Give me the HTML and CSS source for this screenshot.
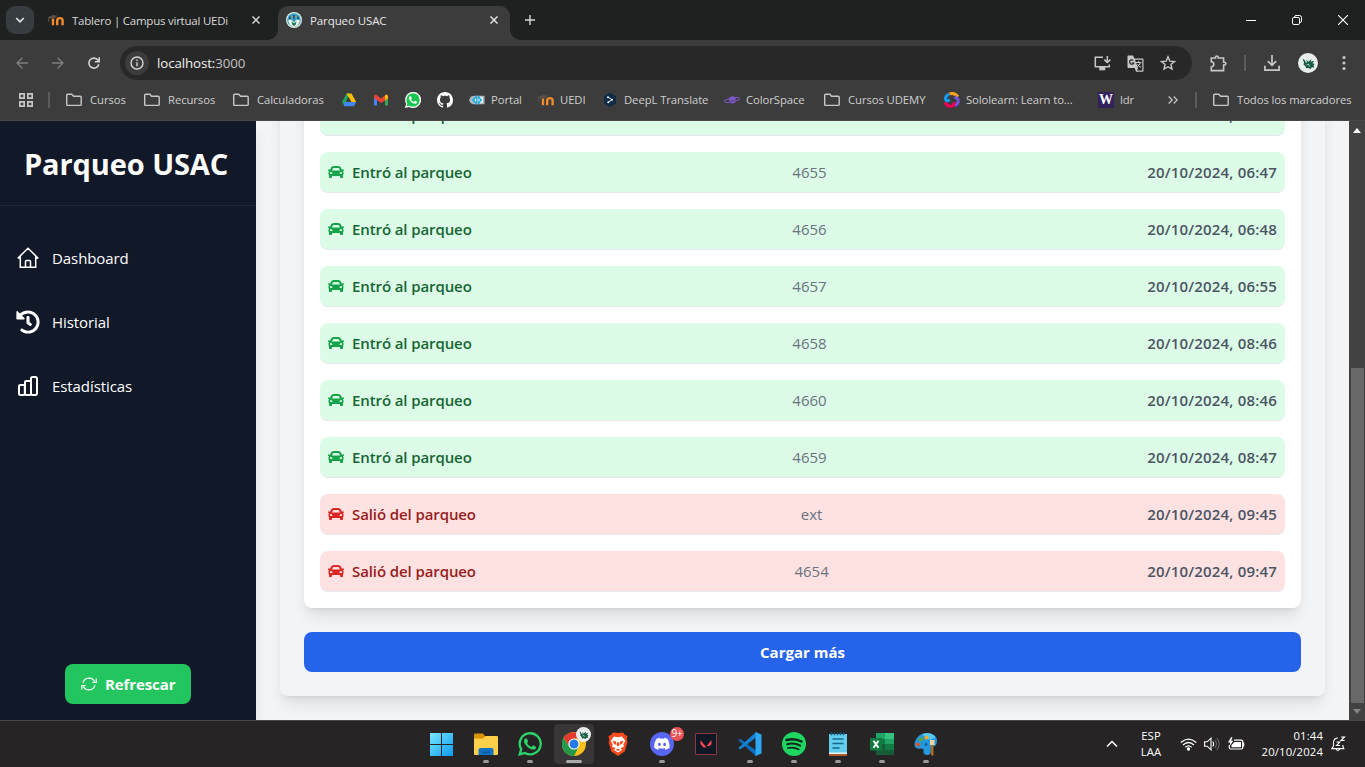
FILE: index.html
```html
<!DOCTYPE html>
<html lang="es">
<head>
<meta charset="utf-8">
<title>Parqueo USAC</title>
<link rel="stylesheet" href="styles.css">
</head>
<body>
<svg class="sprite" aria-hidden="true">
  <symbol id="car" viewBox="0 0 512 512"><path fill="currentColor" d="M499.99 176h-59.87l-16.64-41.6C406.38 91.63 365.57 64 319.5 64h-127c-46.06 0-86.88 27.63-103.99 70.4L71.87 176H12.01C4.2 176-1.53 183.34.37 190.91l6 24C7.7 220.25 12.5 224 18.01 224h20.07C24.65 235.73 16 252.78 16 272v48c0 16.12 6.16 30.67 16 41.93V416c0 17.67 14.33 32 32 32h32c17.67 0 32-14.33 32-32v-32h256v32c0 17.67 14.33 32 32 32h32c17.67 0 32-14.33 32-32v-54.07c9.84-11.25 16-25.8 16-41.93v-48c0-19.22-8.65-36.27-22.07-48H494c5.51 0 10.31-3.75 11.64-9.09l6-24c1.89-7.57-3.84-14.91-11.65-14.91zm-352.06-17.83c7.29-18.22 24.94-30.17 44.57-30.17h127c19.63 0 37.28 11.95 44.57 30.17L384 208H128l19.93-49.83zM96 319.8c-19.2 0-32-12.76-32-31.9S76.8 256 96 256s48 28.71 48 47.85-28.8 15.95-48 15.95zm320 0c-19.2 0-48 3.19-48-15.95S396.8 256 416 256s32 12.76 32 31.9-12.8 31.9-32 31.9z"/></symbol>
  <symbol id="folder" viewBox="0 0 16 16"><path fill="none" stroke="#c7c7c7" stroke-width="1.4" d="M.7 3.2q0-1 1-1h4l1.9 2h6.6q1 0 1 1v7.2q0 1-1 1H1.7q-1 0-1-1z"/></symbol>
  <symbol id="moodle" viewBox="0 0 16 16"><path fill="none" stroke="#f08a2c" stroke-width="2.4" d="M5 13.300V6.500M9.200 13.300V8.600Q9.200 6.100 11.900 6.100T14.600 8.600V13.300"/><path fill="#5a5048" d="M.2 5 5 3l4.500.7L7.600 5.800 4 6.400H1.200V10H.3z"/></symbol>
  <symbol id="dragon" viewBox="0 0 20 20"><circle cx="10" cy="10" r="10" fill="#e9eeec"/><path fill="#175c46" d="m4.500 5.500 2.300 1.800L8 9.800l1-.3-.7-3 2 2.300L13.500 6l-.8 2.800 3.800-1-2 2.400 2 .8-1 1.600.8 2-2.400-.3-1.400 1.700-2.200-1-2 .3-1.300-2.500-1.500-1.400.5-2z"/><path fill="none" stroke="#e9eeec" stroke-width=".7" d="m8.500 12 2-1 1 2.400"/></symbol>
  <symbol id="phone" viewBox="0 0 24 24"><path fill="currentColor" d="M17.472 14.382c-.297-.149-1.758-.867-2.03-.967-.273-.099-.471-.148-.67.15-.197.297-.767.966-.94 1.164-.173.199-.347.223-.644.075-.297-.15-1.255-.463-2.39-1.475-.883-.788-1.48-1.761-1.653-2.059-.173-.297-.018-.458.13-.606.134-.133.298-.347.446-.52.149-.174.198-.298.298-.497.099-.198.05-.371-.025-.52-.075-.149-.669-1.612-.916-2.207-.242-.579-.487-.5-.669-.51-.173-.008-.371-.01-.57-.01-.198 0-.52.074-.792.372-.272.297-1.04 1.016-1.04 2.479 0 1.462 1.065 2.875 1.213 3.074.149.198 2.096 3.2 5.077 4.487.709.306 1.262.489 1.694.625.712.227 1.36.195 1.871.118.571-.085 1.758-.719 2.006-1.413.248-.694.248-1.289.173-1.413-.074-.124-.272-.198-.57-.347"/></symbol>
</svg>

<header class="tabstrip">
  <div class="tab-search"><svg width="10" height="10" viewBox="0 0 10 10"><path fill="none" stroke="#e3e3e3" stroke-width="1.7" d="m1.2 3 3.8 3.8L8.8 3"/></svg></div>
  <div class="tab">
    <svg width="16" height="16"><use href="#moodle"/></svg>
    <span class="tab-title">Tablero | Campus virtual UEDi</span>
    <svg class="close" width="8" height="8"><path stroke="#d5d5d5" stroke-width="1.5" d="m.5.5 7 7m0-7-7 7"/></svg>
  </div>
  <div class="tab active">
    <svg width="16" height="16" viewBox="0 0 16 16"><circle cx="8" cy="8" r="8" fill="#dceee9"/><circle cx="8" cy="8" r="6.8" fill="#3aa0bf"/><path fill="#f5f6e8" d="m2 8.500 3-1 3 3 3-3 3 1-2 4.500-4 2-4-2z"/><path fill="#1d7a55" d="m5.500 9.500 2.500 1.800 2.500-1.800-.6 3L8 14l-1.900-1.500z"/><path fill="#1e5f9a" d="M3 4.500h2V7H3zM7 3h2v4H7zm4 1.500h2V7h-2z"/><path fill="#d8a93a" d="M5.500 4h1v2h-1zm4 0h1v2h-1z"/></svg>
    <span class="tab-title">Parqueo USAC</span>
    <svg class="close" width="8" height="8"><path stroke="#e3e3e3" stroke-width="1.5" d="m.5.5 7 7m0-7-7 7"/></svg>
  </div>
  <svg class="plus" width="10" height="10"><path stroke="#d5d5d5" stroke-width="1.4" d="M5 0v10M0 5h10"/></svg>
  <div class="window-controls">
    <svg width="10" height="10"><path stroke="#fff" d="M0 5.5h10"/></svg>
    <svg width="10" height="10"><path fill="none" stroke="#fff" d="M2.5 2.5V2Q2.5.5 4 .5h3.5q2 0 2 2V6Q9.500 7.500 8 7.500"/><rect x=".5" y="2.500" width="7" height="7" rx="1.300" fill="none" stroke="#fff"/></svg>
    <svg width="10" height="10"><path stroke="#fff" stroke-width="1.1" d="m0 0 10 10m0-10L0 10"/></svg>
  </div>
</header>

<div class="toolbar">
  <svg width="12" height="12" viewBox="0 0 12 12"><path fill="none" stroke="#7d7d7d" stroke-width="1.4" d="M12 6H1m5.300-5.300L1 6l5.300 5.300"/></svg>
  <svg width="12" height="12" viewBox="0 0 12 12"><path fill="none" stroke="#7d7d7d" stroke-width="1.4" d="M0 6h11M5.700.7 11 6l-5.300 5.300"/></svg>
  <svg width="12" height="12" viewBox="0 0 12 12"><path fill="none" stroke="#d0d0d0" stroke-width="1.600" d="M10.800 7.200A5 5 0 1 1 10 3.200L11 4.500M11.200.2v4.500H6.800"/></svg>
  <div class="omnibox">
    <span class="site-info"><svg width="14" height="14"><circle cx="7" cy="7" r="6" fill="none" stroke="#d5d5d5" stroke-width="1.400"/><path stroke="#d5d5d5" stroke-width="1.400" d="M7 6.200v4M7 3.500V5"/></svg></span>
    <span class="url">localhost:<span class="port">3000</span></span>
    <svg width="17" height="15" viewBox="0 0 17 15"><path fill="none" stroke="#c7c7c7" stroke-width="1.500" d="M9 1.300H1.300v9.500h14V8.500"/><path fill="#c7c7c7" d="M5.300 11h6v3.300h-6z"/><path fill="none" stroke="#c7c7c7" stroke-width="1.500" d="M13.300 0v6.300M10.300 3.600l3 2.900 3-2.900"/></svg>
    <svg width="17" height="17" viewBox="0 0 17 17"><path fill="#c7c7c7" d="M1 .5h5l1.500 3H15.500q1 0 1 1V16q0 .8-1 .8H9L7.700 13H1.500Q.5 13 .5 12V1z"/><path fill="#292929" d="M8 4.800h7.300v10.700H10l1-2.300z"/><path fill="none" stroke="#292929" stroke-width="1.200" d="M6.300 5.400a2.200 2.200 0 1 0 .5 2.600H4.700"/><path fill="none" stroke="#c7c7c7" d="M9 7.500h5.500M11.700 6v1.500M13.500 7.500q-1 3-3.500 4.500M10.500 9q1 2.500 3.500 3.300"/></svg>
    <svg width="16" height="16" viewBox="0 0 16 16"><path fill="none" stroke="#c7c7c7" stroke-width="1.400" d="m8 1.800 1.800 4.300 4.700.4-3.600 3 1.100 4.600L8 11.700l-4 2.400 1.100-4.600-3.600-3 4.700-.4z"/></svg>
  </div>
  <div class="actions">
    <svg width="17" height="17" viewBox="0 0 16 16"><path fill="none" stroke="#c7c7c7" stroke-width="1.500" d="M1.200 2.800h4V2q0-1 1.300-1t1.300 1v.8h5v4h.8q1.300 0 1.300 1.300t-1.300 1.300h-.8v5.300H1.200v-3.500Q3.600 10.600 3.600 8.600T1.200 6.300z"/></svg>
    <i class="divider"></i>
    <svg class="download" width="16" height="16" viewBox="0 0 16 16"><path fill="none" stroke="#c7c7c7" stroke-width="1.700" d="M8 0v10M3.800 6.200 8 10.400l4.200-4.200M.9 10.800v4.300h14.200v-4.300"/></svg>
    <svg class="avatar" width="20" height="20"><use href="#dragon"/></svg>
    <svg class="kebab" width="4" height="16" fill="#c7c7c7"><circle cx="2" cy="2.500" r="1.600"/><circle cx="2" cy="8" r="1.600"/><circle cx="2" cy="13.500" r="1.600"/></svg>
  </div>
</div>

<nav class="bookmarks">
  <span class="apps"><svg width="16" height="16" fill="none" stroke="#c7c7c7" stroke-width="1.700"><path d="M1.850 1.850h4.300v4.300h-4.300zM9.850 1.850h4.300v4.300h-4.300zM1.850 9.850h4.300v4.300h-4.300zM9.850 9.850h4.300v4.300h-4.300z"/></svg><i class="divider"></i></span>
  <span class="dir"><svg width="16" height="16"><use href="#folder"/></svg><b>Cursos</b></span>
  <span class="dir"><svg width="16" height="16"><use href="#folder"/></svg><b>Recursos</b></span>
  <span class="dir"><svg width="16" height="16"><use href="#folder"/></svg><b>Calculadoras</b></span>
  <span><svg width="16" height="16" viewBox="0 0 16 16"><path fill="#1fa463" d="M5.500 1.500h3L3.400 14 1 10z"/><path fill="#fbbc04" d="M5.500 1.500h5L15.200 10h-5z"/><path fill="#4285f4" d="M3.300 10h12L13 14.300H3z"/><path fill="#3c3c3c" d="m8 6 2.200 4H5.800z"/></svg></span>
  <span><svg width="16" height="16" viewBox="0 0 16 16"><path fill="#4285f4" d="M1 4h3v9.500H1z"/><path fill="#34a853" d="M12 4h3v9.500h-3z"/><path fill="#ea4335" d="M1 3.500 3 2.600l5 3.900 5-3.900 2 .9v3L8 11 1 6z"/><path fill="#fbbc04" d="m12 3.500 1.500-1L15 4v2.500l-3 2z"/></svg></span>
  <span><svg width="16" height="16" viewBox="0 0 24 24" color="#fff"><path fill="#fff" d="M0 24 1.700 17.800A12 12 0 1 1 6.300 22.400z"/><circle cx="12" cy="12" r="10" fill="#19c650"/><path fill="#19c650" d="m2.500 21.500 1.200-5 4 3.800z"/><use href="#phone"/></svg></span>
  <span><svg width="16" height="16" viewBox="0 0 16 16"><path fill="#fff" d="M8 0C3.580 0 0 3.580 0 8c0 3.540 2.290 6.530 5.470 7.590.4.070.55-.17.55-.38 0-.19-.01-.82-.01-1.490-2.010.37-2.530-.49-2.690-.94-.09-.23-.48-.94-.82-1.130-.28-.15-.68-.52-.01-.53.63-.01 1.080.58 1.230.82.720 1.210 1.870.87 2.330.66.070-.52.280-.87.510-1.070-1.780-.2-3.640-.89-3.640-3.950 0-.87.310-1.590.82-2.150-.08-.2-.36-1.020.08-2.120 0 0 .67-.21 2.200.82.640-.18 1.320-.27 2-.27s1.360.09 2 .27c1.530-1.040 2.200-.82 2.200-.82.440 1.100.160 1.920.080 2.120.510.560.820 1.270.820 2.150 0 3.070-1.870 3.750-3.650 3.950.29.250.54.730.54 1.480 0 1.070-.01 1.930-.01 2.200 0 .21.150.46.550.38A8.010 8.010 0 0 0 16 8c0-4.420-3.580-8-8-8z"/></svg></span>
  <span><svg width="16" height="16" viewBox="0 0 16 16"><path fill="#aeb8bd" d="M0 8 2 4.500 5 3.700h10.500v8.600H4L1.500 11z"/><path fill="#e9eef0" d="m11 4.500 3 1v5l-3 1z"/><path fill="#18aee0" d="M7.800 3v10L2.800 8zM8.800 3l4.400 5-4.400 5z"/><path fill="#fff" d="M5.500 8 7 6.300v3.400zm4-1.700L11 8 9.500 9.700z"/></svg><b>Portal</b></span>
  <span><svg width="16" height="16"><use href="#moodle"/></svg><b>UEDI</b></span>
  <span><svg width="16" height="16" viewBox="0 0 16 16"><path fill="#0f2b46" d="m8 .8 6 3.500v7L8 15l-6-3.700v-7z"/><path fill="none" stroke="#fff" stroke-width=".9" d="m6 5.200 4 2.500-3.700 2.600"/><circle cx="6" cy="5.200" r="1" fill="#fff"/><circle cx="10" cy="7.700" r="1" fill="#fff"/><circle cx="6.300" cy="10.300" r="1" fill="#fff"/></svg><b>DeepL Translate</b></span>
  <span><svg width="16" height="16" viewBox="0 0 16 16"><circle cx="8.500" cy="7.800" r="3.600" fill="#7e57c2"/><ellipse cx="8" cy="8" rx="7.600" ry="1.800" fill="none" stroke="#7e57c2" transform="rotate(-11 8 8)"/><path fill="none" stroke="#4b3b63" stroke-width=".8" d="M4 9.500q5 .3 8.500-2"/></svg><b>ColorSpace</b></span>
  <span class="dir"><svg width="16" height="16"><use href="#folder"/></svg><b>Cursos UDEMY</b></span>
  <span><svg width="16" height="16" viewBox="0 0 16 16" fill="none" stroke-width="3"><path stroke="#f9a21b" d="M5.500 2Q10-.1 14 4.800"/><path stroke="#7355dd" d="M10.500 4.800Q16 7 13.500 11.500L11 14"/><path stroke="#149ef2" d="M5 2Q.8 4 1.700 8q1.800 2 4-.5"/><path stroke="#f40054" d="M1 10.500q2.500 5 7.500 3.500 2-1 1.500-4"/></svg><b>Sololearn: Learn to...</b></span>
  <span><i class="w-logo">W</i><b>ldr</b></span>
  <span class="more"><svg width="10" height="8" viewBox="0 0 10 8"><path fill="none" stroke="#c7c7c7" stroke-width="1.300" d="m.7.5 3.500 3.500L.7 7.500m5-7L9.200 4 5.700 7.500"/></svg><i class="divider"></i></span>
  <span class="dir"><svg width="16" height="16"><use href="#folder"/></svg><b>Todos los marcadores</b></span>
</nav>

<div class="page">
  <aside class="sidebar">
    <h1>Parqueo USAC</h1>
    <nav class="menu">
      <a><svg width="24" height="24" viewBox="0 0 24 24" fill="none" stroke="currentColor" stroke-width="1.500"><path d="M1.800 12.200 12 2.300l10.200 9.900M4.300 10.200v11h15.400v-11M9.500 21v-5.500q0-1 1-1h3q1 0 1 1V21M1.800 12.200h2.500m15.400 0h2.500"/></svg>Dashboard</a>
      <a><svg width="24" height="24" viewBox="0 0 512 512"><path fill="currentColor" d="M504 255.531c.253 136.640-111.180 248.372-247.820 248.468-59.015.042-113.223-20.530-155.822-54.911-11.077-8.940-11.905-25.541-1.839-35.607l11.267-11.267c8.609-8.609 22.353-9.551 31.891-1.984C173.062 425.135 212.781 440 256 440c101.705 0 184-82.311 184-184 0-101.705-82.311-184-184-184-48.814 0-93.149 18.969-126.068 49.932l50.754 50.754c10.080 10.080 2.941 27.314-11.313 27.314H24c-8.837 0-16-7.163-16-16V38.627c0-14.254 17.234-21.393 27.314-11.314l49.372 49.372C129.209 34.136 189.552 8 256 8c136.810 0 247.747 110.780 248 247.531zm-180.912 78.784l9.823-12.630c8.138-10.463 6.253-25.542-4.210-33.679L288 256.349V152c0-13.255-10.745-24-24-24h-16c-13.255 0-24 10.745-24 24v135.651l65.409 50.874c10.463 8.137 25.541 6.253 33.679-4.210z"/></svg>Historial</a>
      <a><svg width="24" height="24" viewBox="0 0 24 24" fill="none" stroke="currentColor" stroke-width="2"><rect x="3" y="11" width="5.800" height="10" rx="1.200"/><rect x="9" y="7" width="6" height="14" rx="1.200"/><rect x="15" y="3" width="6" height="18" rx="1.700"/></svg>Estadísticas</a>
    </nav>
    <button class="refresh"><svg width="16" height="16" viewBox="0 0 16 16" fill="none" stroke="currentColor" stroke-width="1.200"><path d="M2 6.800A6.200 6.200 0 0 1 13.800 6M14 9.200A6.200 6.200 0 0 1 2.200 10M15.300 2.500v4H11.300M.7 13.500v-4h4"/></svg>Refrescar</button>
  </aside>
  <main class="content">
    <section class="panel">
      <ul class="records">
        <li class="in"><span class="event"><svg width="16" height="16"><use href="#car"/></svg>Entró al parqueo</span><span class="tag">4653</span><time>20/10/2024, 06:47</time></li>
        <li class="in"><span class="event"><svg width="16" height="16"><use href="#car"/></svg>Entró al parqueo</span><span class="tag">4655</span><time>20/10/2024, 06:47</time></li>
        <li class="in"><span class="event"><svg width="16" height="16"><use href="#car"/></svg>Entró al parqueo</span><span class="tag">4656</span><time>20/10/2024, 06:48</time></li>
        <li class="in"><span class="event"><svg width="16" height="16"><use href="#car"/></svg>Entró al parqueo</span><span class="tag">4657</span><time>20/10/2024, 06:55</time></li>
        <li class="in"><span class="event"><svg width="16" height="16"><use href="#car"/></svg>Entró al parqueo</span><span class="tag">4658</span><time>20/10/2024, 08:46</time></li>
        <li class="in"><span class="event"><svg width="16" height="16"><use href="#car"/></svg>Entró al parqueo</span><span class="tag">4660</span><time>20/10/2024, 08:46</time></li>
        <li class="in"><span class="event"><svg width="16" height="16"><use href="#car"/></svg>Entró al parqueo</span><span class="tag">4659</span><time>20/10/2024, 08:47</time></li>
        <li class="out"><span class="event"><svg width="16" height="16"><use href="#car"/></svg>Salió del parqueo</span><span class="tag">ext</span><time>20/10/2024, 09:45</time></li>
        <li class="out"><span class="event"><svg width="16" height="16"><use href="#car"/></svg>Salió del parqueo</span><span class="tag">4654</span><time>20/10/2024, 09:47</time></li>
      </ul>
      <button class="load-more">Cargar más</button>
    </section>
  </main>
  <div class="scrollbar">
    <svg width="8" height="5"><path fill="#fff" d="M0 5 4 0l4 5z"/></svg>
    <div class="track"><div class="thumb"></div></div>
    <svg width="8" height="5"><path fill="#858585" d="m0 0 4 5 4-5z"/></svg>
  </div>
</div>

<footer class="taskbar">
  <div class="dock">
    <span class="app"><svg width="24" height="24"><defs><linearGradient id="win" x2="1" y2="1"><stop stop-color="#7be8ff"/><stop offset="1" stop-color="#0a9bf5"/></linearGradient></defs><path fill="url(#win)" d="M0 1h11v11H0zM12 1h11v11H12zM0 13h11v11H0zM12 13h11v11H12z"/></svg></span>
    <span class="app open"><svg width="24" height="24"><path fill="#d79400" d="M0 2.500q0-1 1-1h8l2 2.500v5H0z"/><path fill="#ffd04c" d="M0 6.500h9L11.500 4H23q1 0 1 1v17q0 1-1 1H1q-1 0-1-1z"/><path fill="#1272c4" d="M4.500 23v-5q0-2 2-2h11q2 0 2 2v5z"/><path fill="#0a569c" d="M8 19.500h8v1.600H8z"/></svg></span>
    <span class="app open"><svg width="24" height="24" viewBox="0 0 24 24" color="#2bd46b"><path fill="none" stroke="#2bd46b" stroke-width="2.300" d="M1.700 22.300 3.200 17.200A10.500 10.500 0 1 1 7 20.900z"/><use href="#phone"/></svg></span>
    <span class="app open current"><svg width="24" height="24"><circle cx="12" cy="12" r="12" fill="#fbc116"/><path fill="#e33b2e" d="M12 12V6.500h10.500A12 12 0 0 0 1.600 6L7 14.500z"/><path fill="#219a4c" d="M1.600 6 7.300 15l9.400 0L12 24A12 12 0 0 1 1.600 6z"/><circle cx="12" cy="12" r="5.600" fill="#fff"/><circle cx="12" cy="12" r="4.500" fill="#247be8"/></svg><svg class="badge" width="15" height="15"><use href="#dragon"/></svg></span>
    <span class="app"><svg width="24" height="24"><path fill="#fb4a1d" d="m7 .5 5 .5 5-.5 2 2.500 2.500 1-.8 4 .8 2-2.800 9.500L12 24l-6.700-4.500L2.500 10l.8-2-.8-4L5 3z"/><path fill="#fff" d="m8 4.500 4 .8 4-.8 3.300 4.300-2 3.500.7 2.400-3.500 1.200 1.500 2L12 20.500 8 17.900l1.500-2L6 14.700l.7-2.400-2-3.500z"/><path fill="#fb4a1d" d="m6.500 8.700 3.500.8.500 3.500-2.500-1zm11 0-3.500.8-.5 3.500 2.500-1zM11.300 10h1.400l.5 3.500L12 14.500l-1.200-1zm-1.500 7.700L12 16.700l2.200 1-2.200 1.300z"/></svg></span>
    <span class="app open"><svg width="24" height="24" viewBox="0 0 24 24"><circle cx="12" cy="12" r="12" fill="#5865f2"/><path fill="#fff" transform="translate(4.200 4) scale(.65)" d="M20.317 4.370a19.791 19.791 0 0 0-4.885-1.515c-.21.375-.444.864-.608 1.250a18.270 18.270 0 0 0-5.487 0 12.640 12.640 0 0 0-.617-1.250A19.736 19.736 0 0 0 3.677 4.370C.533 9.046-.32 13.580.099 18.058a19.900 19.900 0 0 0 5.993 3.030c.462-.63.874-1.295 1.226-1.994a13.107 13.107 0 0 1-1.872-.892l.372-.292c3.928 1.793 8.180 1.793 12.062 0l.373.292a12.300 12.300 0 0 1-1.873.892c.36.698.772 1.362 1.225 1.993a19.839 19.839 0 0 0 6.002-3.030c.5-5.177-.838-9.674-3.290-13.687zM8.020 15.330c-1.183 0-2.157-1.085-2.157-2.419s.956-2.419 2.157-2.419 2.176 1.096 2.157 2.420c0 1.333-.956 2.418-2.157 2.418zm7.975 0c-1.183 0-2.157-1.085-2.157-2.419s.955-2.419 2.157-2.419 2.176 1.096 2.157 2.420c0 1.333-.946 2.418-2.157 2.418z"/></svg><b class="count">9+</b></span>
    <span class="app"><svg width="24" height="24"><path fill="#101823" stroke="#8d3542" d="M1.500 1.500h21v21h-21z"/><path fill="#ff4655" d="m6.500 8 6 7.500H9.400L6.500 12zm11 0v4l-1.700 2h-3.200z"/></svg></span>
    <span class="app open"><svg width="24" height="24"><path fill="#0b6dbd" d="m.3 8.200 2-1.500L18 18.500V24z"/><path fill="#1382d2" d="m.3 16 2 1.500L18 5.500V0z"/><path fill="#2ea8f2" d="m17.500 0 6 2.500v19l-6 2.500z"/></svg></span>
    <span class="app open"><svg width="24" height="24"><circle cx="12" cy="12" r="12" fill="#1ed760"/><path fill="none" stroke="#14251b" stroke-linecap="round" d="M4.500 8q8-2.300 15 1.500" stroke-width="2.500"/><path fill="none" stroke="#14251b" stroke-linecap="round" stroke-width="2.100" d="M5.200 12.200q7-1.800 13 1.500"/><path fill="none" stroke="#14251b" stroke-linecap="round" stroke-width="1.700" d="M5.800 16q6-1.400 11 1.400"/></svg></span>
    <span class="app open"><svg width="24" height="24"><path fill="#63cdeb" d="M3 2h18v19.500H3z"/><path fill="#e8f3f6" d="M3 20.500h18V22H3z"/><path fill="#a65a2a" d="M3 22h18v2H3z"/><path stroke="#116a96" stroke-width="1.500" d="M6.500 7h11M6.500 11.500h11M6.500 16h7"/><path stroke="#125879" stroke-width="1.500" d="M5.500.3v3M8.500.3v3M11.500.3v3M14.500.3v3M17.500.3v3"/></svg></span>
    <span class="app open"><svg width="24" height="24"><path fill="#21a366" d="M6 1h18v22H6z"/><path fill="#33c481" d="M15 1h9v6h-9z"/><path fill="#107c41" d="M6 7h9v5H6zM15 12h9v6h-9z"/><path fill="#185c37" d="M6 12h9v6h9v5H6z"/><path fill="#0f7b40" d="M0 6h12v12.500H0z"/><path stroke="#fff" stroke-width="1.900" d="m3.500 8.700 5 7m0-7-5 7"/></svg></span>
    <span class="app open"><svg width="24" height="24"><path fill="#2797dd" d="M12 1C19 .5 23.500 5 23 9.500q-.5 5-4 5-3 .5-2 4 0 4.500-4 4.500-4 0-3.500-4 .5-3-2-2.500-3 1-6-1Q-.2 14 1 9.500 4 1.500 12 1z"/><path fill="#57c8f3" d="M12 1q7-.3 9.500 4.500L16 8 8 2.500z"/><circle cx="12.500" cy="5.500" r="2.100" fill="#f7a81d"/><circle cx="7" cy="7.500" r="2.100" fill="#55a92d"/><circle cx="4" cy="12.500" r="2.100" fill="#d8532b"/><circle cx="12" cy="12.500" r="1.400" fill="#125b93"/><path fill="#f1d19c" d="M16 8h4.500v5H16z"/><path fill="#b36a1c" d="M17 13h2.500v10q-1.200 1.400-2.500 0z"/></svg></span>
  </div>
  <div class="tray">
    <svg class="chevron" width="12" height="8"><path fill="none" stroke="#fff" stroke-width="1.500" d="m1 6.500 5-5 5 5"/></svg>
    <span class="lang">ESP<br>LAA</span>
    <svg class="wifi" width="17" height="13" viewBox="0 0 17 13" fill="none" stroke="#fff" stroke-width="1.300"><path d="M.8 4.600q7.700-7 15.400 0M3 7q5.500-5 11 0M5.300 9.200q3.200-2.700 6.400 0"/><circle cx="8.500" cy="11" r="1" fill="#fff"/></svg>
    <svg class="sound" width="16" height="14" fill="none" stroke="#fff" stroke-width="1.100"><path d="M.6 4.800h2.600L7 1.200v11.600L3.200 9.200H.6z"/><path d="M8.800 4.500q1.700 2.500 0 5"/><path stroke="#666" d="M11 3q3 4 0 8M13 1q4.300 6 0 12"/></svg>
    <svg class="battery" width="17" height="14"><path fill="none" stroke="#fff" stroke-width="1.200" d="M6 3.200h7.500q1.200 0 1.200 1.200v6.400q0 1.200-1.200 1.200h-11q-1.200 0-1.200-1.200V8"/><path fill="#fff" d="M6.500 5H13v5.300H3.500V8zM15 5.500h1.200v4H15zM3 .3 0 5.500h2.200L1.700 9 5.300 3.800H3.200L4.500.3z"/></svg>
    <span class="clock">01:44<br>20/10/2024</span>
    <svg class="bell" width="15" height="16" viewBox="0 0 15 16" fill="none" stroke="#fff" stroke-width="1.100"><path d="M7 2Q3 2 2.500 6v4L.8 12.600h12L11.800 10V9M5 13q1.800 3 3.800 0M5.500 6h3.300l-3.300 3.500h3.500M10 1h3.500L10 4.500h3.700"/></svg>
  </div>
</footer>
</body>
</html>
```
FILE: styles.css
```css
* { box-sizing: border-box; }
body {
  margin: 0;
  width: 1365px;
  height: 767px;
  overflow: hidden;
  display: flex;
  flex-direction: column;
  font-family: "Open Sans", "Noto Sans", sans-serif;
  background: #3c3c3c;
}
svg { flex: none; display: block; }
i { font-style: normal; }
button { border: 0; font-family: inherit; }
.sprite { position: absolute; width: 0; height: 0; }

.tabstrip {
  flex: none;
  height: 40px;
  display: flex;
  align-items: center;
  background: #1f2020;
  color: #d8d8d8;
}
.tab-search {
  width: 28px;
  height: 28px;
  margin: 0 10px 0 6px;
  display: grid;
  place-items: center;
  border-radius: 9px;
  background: #373c40;
}
.tab {
  width: 234px;
  height: 34px;
  align-self: flex-end;
  display: flex;
  align-items: center;
  gap: 8px;
  padding: 0 18px 6px 4px;
}
.tab-title { font-size: 11.5px; letter-spacing: -.23px; white-space: nowrap; }
.tab .close { margin-left: auto; }
.tab.active {
  width: 232px;
  padding: 0 12px 6px 8px;
  border-radius: 10px 10px 0 0;
  background: #3c3c3c;
  color: #e8e8e8;
  position: relative;
}
.tab.active .tab-title { letter-spacing: -.1px; }
.tab.active::before,
.tab.active::after {
  content: "";
  position: absolute;
  bottom: 0;
  width: 10px;
  height: 10px;
}
.tab.active::before { left: -10px; background: radial-gradient(circle at 0 0, transparent 9.5px, #3c3c3c 10px); }
.tab.active::after { right: -10px; background: radial-gradient(circle at 100% 0, transparent 9.5px, #3c3c3c 10px); }
.plus { margin-left: 15px; }
.window-controls { margin-left: auto; display: flex; gap: 36px; padding-right: 17px; }

.toolbar {
  flex: none;
  height: 46px;
  display: flex;
  align-items: center;
  gap: 24px;
  padding: 0 19px 0 16px;
  background: #3c3c3c;
}
.omnibox {
  width: 1072px;
  height: 34px;
  margin-left: -4px;
  display: flex;
  align-items: center;
  gap: 16px;
  padding: 0 16px 0 5px;
  border-radius: 17px;
  background: #282828;
}
.site-info {
  width: 24px;
  height: 24px;
  display: grid;
  place-items: center;
  border-radius: 50%;
  background: #3c3c3c;
}
.url { flex: 1; margin-left: -8px; font-size: 13.3px; letter-spacing: -.1px; color: #f0f0f0; }
.port { color: #c4c4c4; }
.actions { flex: 1; display: flex; align-items: center; margin-left: -6px; }
.divider { width: 2px; height: 16px; background: #5c5c5c; }
.actions .divider { margin: 0 18px 0 17px; }
.avatar { margin-left: 18px; }
.kebab { margin-left: auto; }

.bookmarks {
  flex: none;
  height: 35px;
  display: grid;
  grid-template-columns: 48px 78px 89px 108px 32px 32px 32px 32px 69px 64px 122px 100px 120px 154px 70px 45px 1fr;
  align-items: center;
  padding: 0 0 6px 18px;
  border-bottom: 1px solid #484848;
  background: #3c3c3c;
  font-size: 11.3px;
  letter-spacing: -.08px;
  color: #cfcfcf;
  white-space: nowrap;
}
.bookmarks span { display: flex; align-items: center; gap: 6px; }
.bookmarks b { font-weight: 400; padding-bottom: 2px; }
.bookmarks .dir { gap: 8px; }
.bookmarks .apps { gap: 14px; }
.bookmarks .more { gap: 17px; }
.w-logo {
  width: 16px;
  height: 16px;
  background: #33215c;
  color: #fff;
  font: bold 14px/16px "Liberation Serif", serif;
  text-align: center;
}

.page { flex: none; height: 599px; display: flex; background: #f3f4f6; }
.sidebar {
  width: 256px;
  display: flex;
  flex-direction: column;
  background: #111827;
  color: #fff;
  box-shadow: 0 10px 15px -3px #0000001a, 0 4px 6px -4px #0000001a;
}
.sidebar h1 {
  margin: 0;
  height: 85px;
  padding: 23px 0 0 24px;
  border-bottom: 1px solid #1f2937;
  font-size: 29px;
  line-height: 40px;
  letter-spacing: -.1px;
  white-space: nowrap;
}
.menu { display: flex; flex-direction: column; gap: 40px; padding: 40px 16px 0; }
.menu a {
  display: flex;
  align-items: center;
  gap: 12px;
  height: 24px;
  font-size: 15px;
  letter-spacing: -.08px;
}
.refresh {
  width: 126px;
  height: 40px;
  margin: auto auto 16px 65px;
  display: flex;
  align-items: center;
  gap: 8px;
  padding: 0 16px;
  border-radius: 8px;
  background: #22c55e;
  color: #fff;
  font-size: 15px;
  font-weight: 700;
  letter-spacing: -.1px;
}
.content {
  width: 1093px;
  display: flex;
  flex-direction: column;
  justify-content: flex-end;
  padding: 24px;
  overflow: hidden;
}
.panel {
  flex: none;
  padding: 24px;
  border-radius: 8px;
  box-shadow: 0 10px 15px -3px #0000001a, 0 4px 6px -4px #0000001a;
}
.records {
  list-style: none;
  margin: 0 0 24px;
  padding: 16px;
  display: flex;
  flex-direction: column;
  gap: 16px;
  border-radius: 8px;
  background: #fff;
  box-shadow: 0 10px 15px -3px #0000001a, 0 4px 6px -4px #0000001a;
}
.records li {
  height: 41px;
  display: flex;
  align-items: center;
  justify-content: space-between;
  padding: 0 8px;
  border-bottom: 1px solid #e5e7eb;
  border-radius: 8px;
  font-size: 15px;
  color: #4b5563;
}
.event { display: flex; align-items: center; gap: 8px; font-weight: 600; letter-spacing: -.1px; }
.in { background: #dcfce7; }
.in .event { color: #166534; }
.in svg { color: #16a34a; }
.out { background: #fee2e2; }
.out .event { color: #991b1b; }
.out svg { color: #dc2626; }
.tag { color: #6b7280; }
.records time { font-weight: 600; letter-spacing: .18px; }
.load-more {
  width: 100%;
  height: 40px;
  border-radius: 8px;
  background: #2563eb;
  color: #fff;
  font-size: 15px;
  font-weight: 700;
  letter-spacing: 0;
}
.scrollbar {
  width: 16px;
  display: flex;
  flex-direction: column;
  align-items: center;
  gap: 6px;
  padding: 7px 0 6px;
  background: #424242;
}
.track { flex: 1; display: flex; align-items: flex-end; }
.thumb { width: 13px; height: 335px; background: #686868; }

.taskbar {
  flex: none;
  height: 47px;
  display: flex;
  justify-content: space-between;
  padding-left: 422px;
  border-top: 1px solid #4a4a4a;
  background: #262425;
  color: #fff;
}
.dock { display: flex; gap: 4px; padding-top: 3px; }
.app {
  position: relative;
  width: 40px;
  height: 40px;
  display: grid;
  place-items: center;
  border-radius: 4px;
}
.app.open::after {
  content: "";
  position: absolute;
  bottom: 1px;
  left: 17px;
  width: 6px;
  height: 3px;
  border-radius: 2px;
  background: #999;
}
.app.current { background: #383637; }
.app.open.current::after { left: 12px; width: 16px; background: #aaa; }
.badge { position: absolute; top: 3px; right: 3px; }
.count {
  position: absolute;
  top: 3px;
  right: -2px;
  width: 14px;
  height: 14px;
  border-radius: 50%;
  background: #ec5356;
  font-size: 10px;
  font-weight: 400;
  line-height: 13px;
  letter-spacing: -.3px;
  text-align: center;
}
.tray { display: flex; align-items: center; font-size: 11.3px; line-height: 16px; letter-spacing: .15px; }
.chevron { margin-right: 1px; }
.lang { width: 24px; margin: 0 17px 0 20px; text-align: center; }
.sound { margin-left: 7px; }
.battery { margin-left: 8px; }
.clock { width: 68px; margin: -1px 8px 0 10px; text-align: right; white-space: nowrap; }
.bell { margin-right: 19px; }
```
